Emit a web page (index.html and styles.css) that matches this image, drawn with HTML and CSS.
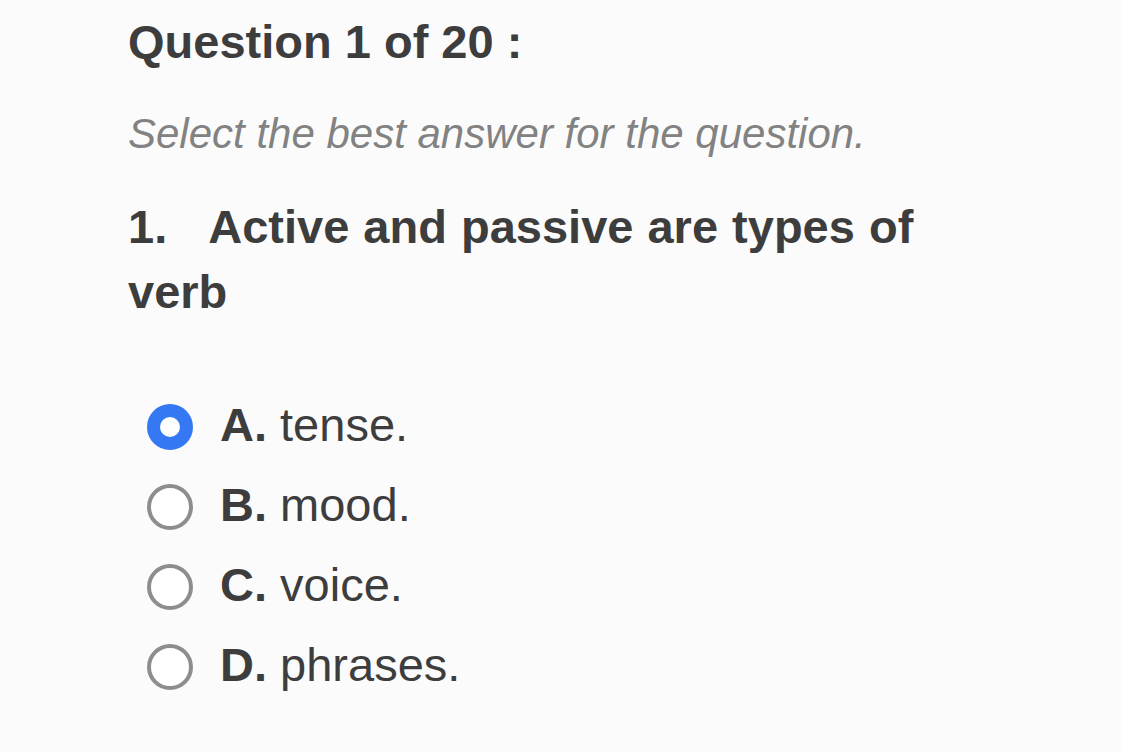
FILE: index.html
```html
<!DOCTYPE html>
<html lang="en">
<head>
<meta charset="utf-8">
<title>Quiz</title>
<link rel="stylesheet" href="styles.css">
</head>
<body>
<main class="quiz">
  <h1 class="title">Question 1 of 20 :</h1>
  <p class="hint">Select the best answer for the question.</p>
  <p class="question"><span class="qnum">1.</span>Active and passive are types of verb</p>
  <ul class="options">
    <li class="option"><span class="radio selected"></span><span class="label"><b>A.</b> tense.</span></li>
    <li class="option"><span class="radio"></span><span class="label"><b>B.</b> mood.</span></li>
    <li class="option"><span class="radio"></span><span class="label"><b>C.</b> voice.</span></li>
    <li class="option"><span class="radio"></span><span class="label"><b>D.</b> phrases.</span></li>
  </ul>
</main>
</body>
</html>
```
FILE: styles.css
```css
html, body {
  margin: 0;
  padding: 0;
  background: #fbfbfb;
}
body {
  font-family: "Liberation Sans", Arial, Helvetica, sans-serif;
  color: #3d3d3d;
}
.quiz {
  padding: 14px 0 0 128px;
  width: 820px;
}
.title {
  margin: 0;
  font-size: 47px;
  line-height: 56px;
  font-weight: 700;
}
.hint {
  margin: 39px 0 0 0;
  font-size: 42px;
  line-height: 50px;
  font-style: italic;
  color: #828282;
}
.question {
  margin: 35px 0 0 0;
  font-size: 47px;
  line-height: 65px;
  font-weight: 700;
  word-spacing: 1px;
}
.qnum {
  margin-right: 41px;
}
.options {
  list-style: none;
  margin: 63px 0 0 0;
  padding: 0;
}
.option {
  display: flex;
  align-items: center;
  height: 80px;
  padding-left: 19px;
  gap: 27px;
}
.radio {
  width: 46px;
  height: 46px;
  box-sizing: border-box;
  border-radius: 50%;
  border: 4px solid #8d8d8d;
  background: #ffffff;
  flex: none;
}
.radio.selected {
  border: 13px solid #3479f3;
}
.label {
  font-size: 47px;
  line-height: 80px;
  position: relative;
  top: -2px;
}
.label b {
  font-weight: 700;
}
```
